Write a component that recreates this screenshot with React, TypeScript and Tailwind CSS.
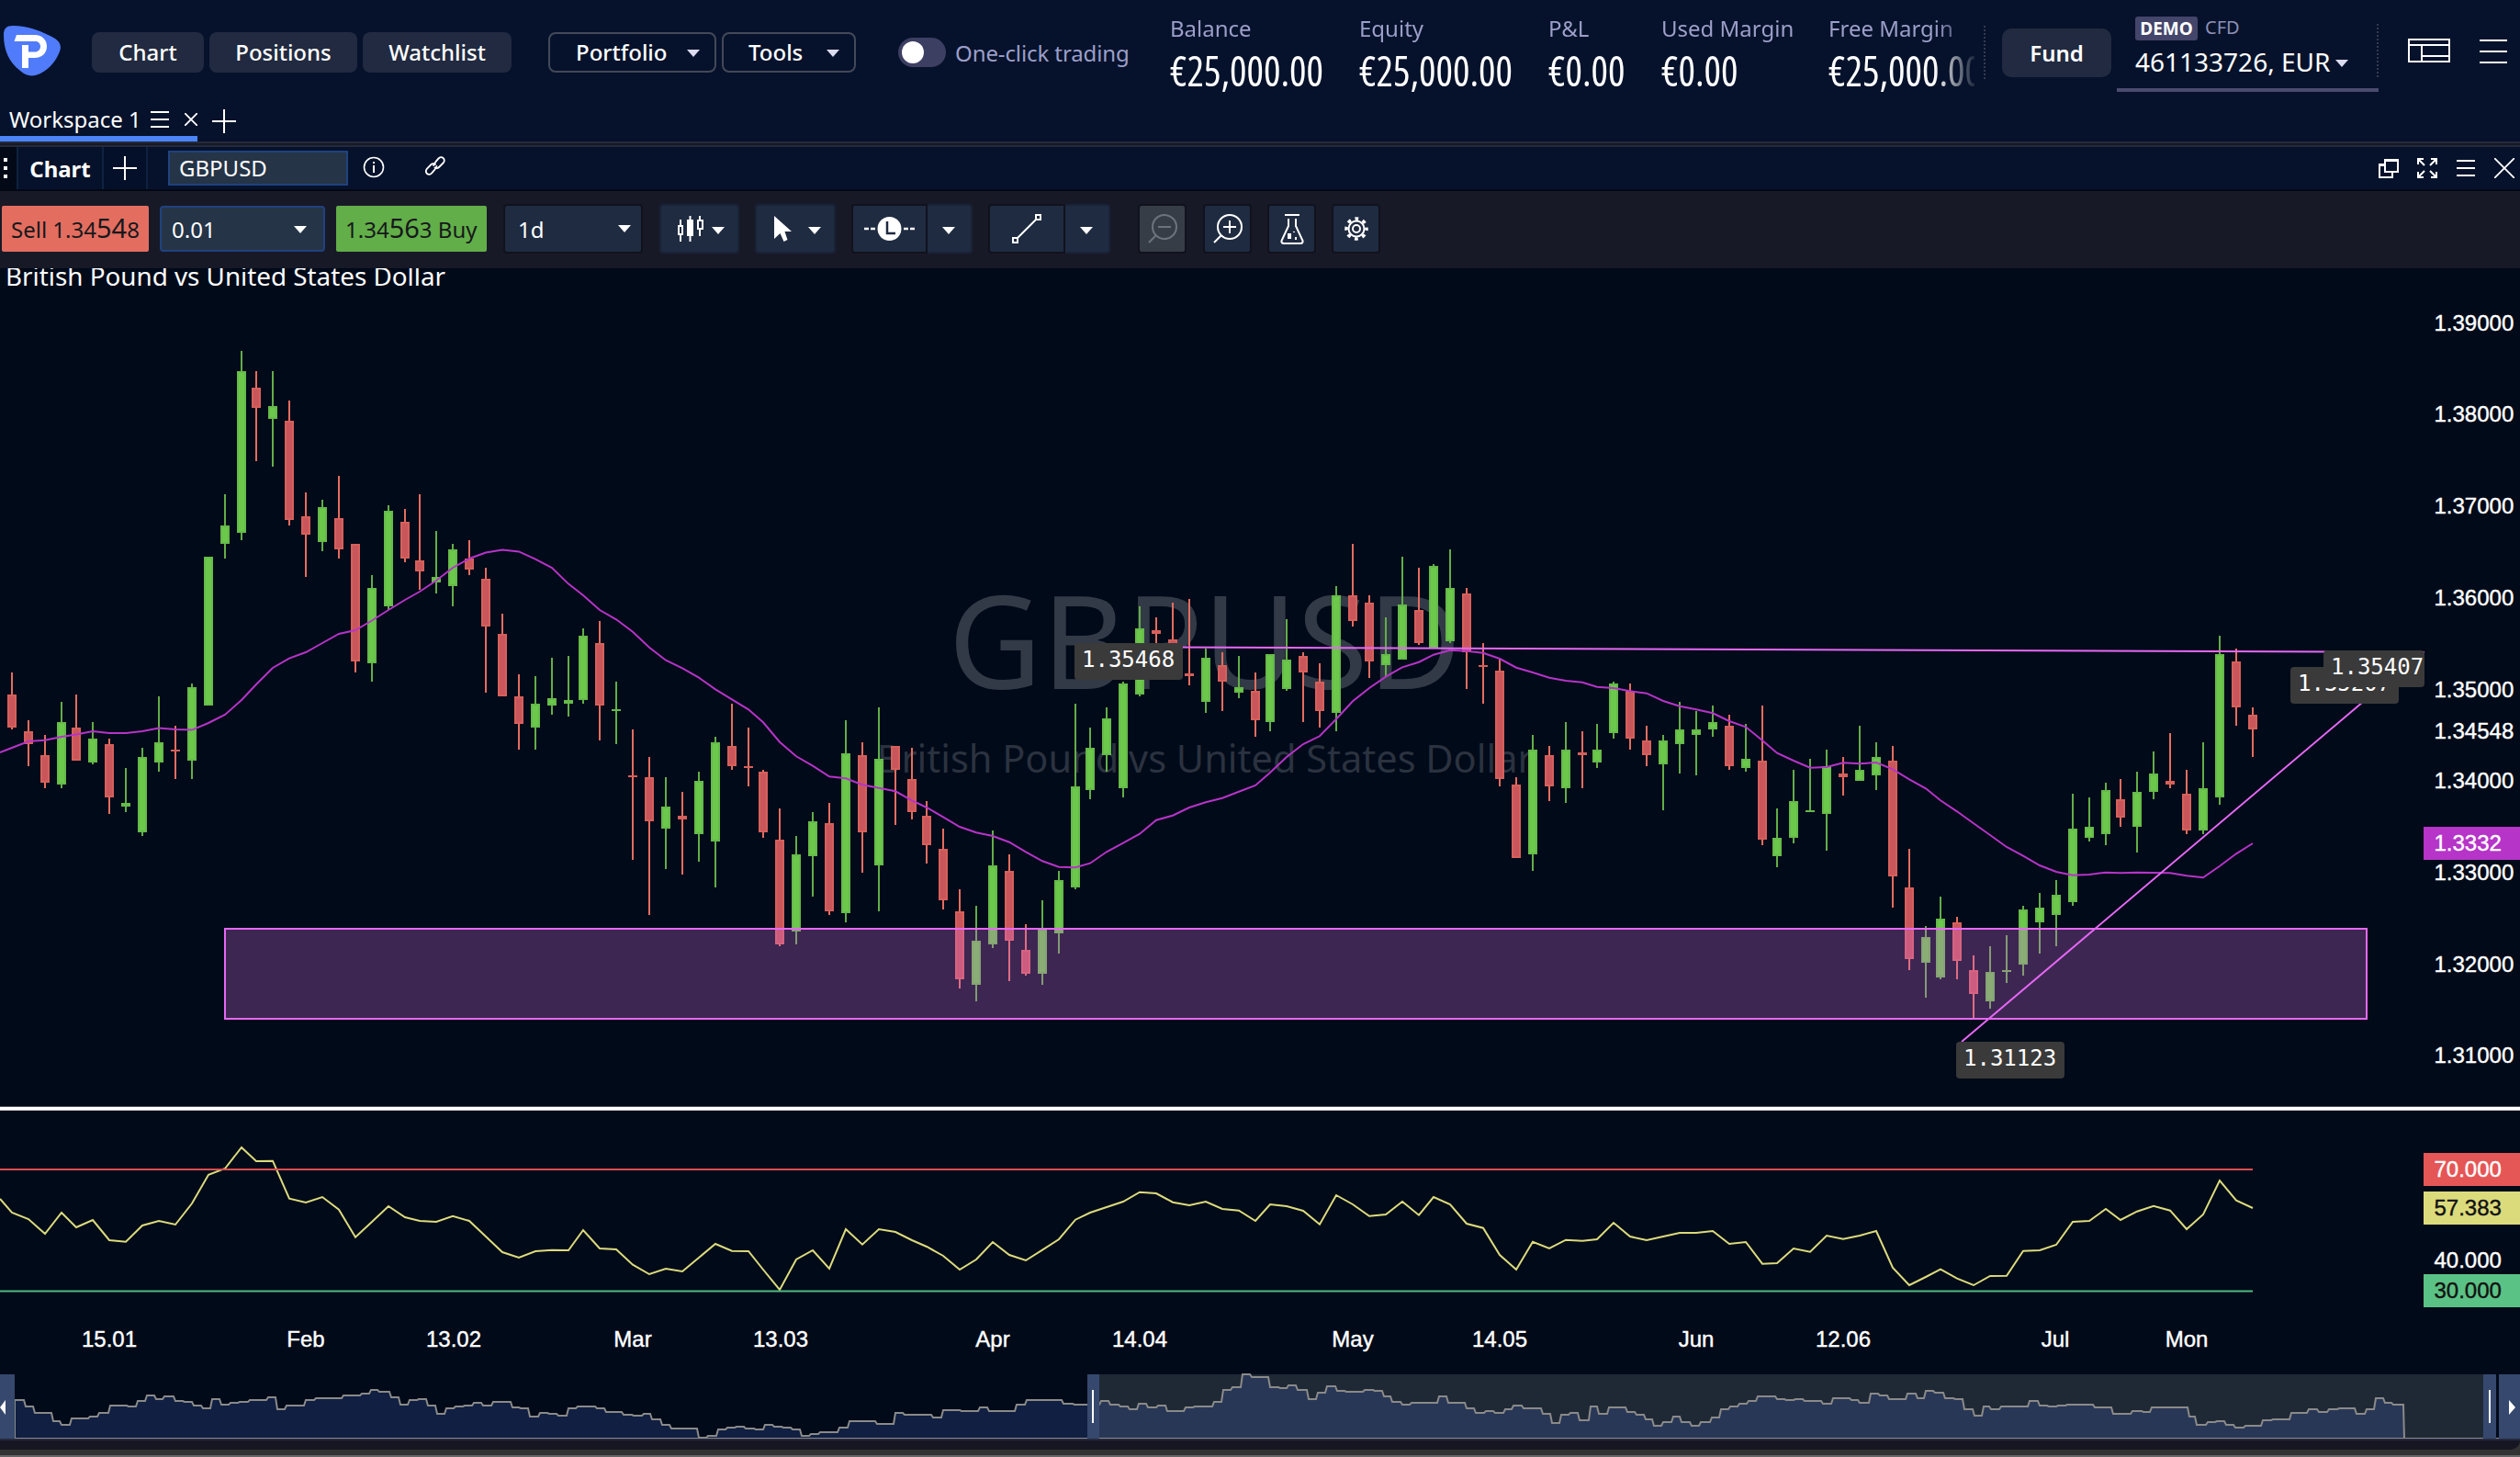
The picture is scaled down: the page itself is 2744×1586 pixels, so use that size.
import type { ReactNode } from 'react';
import clsx from 'clsx';

type Candle = [dir: 'u' | 'd', high: number, top: number, bottom: number, low: number];

// One entry per trading day, in plot pixels
const CANDLES: Candle[] = [
  ['d', 732, 756, 792, 794], ['d', 784, 796, 810, 834], ['d', 800, 822, 852, 858], ['u', 764, 786, 854, 858],
  ['d', 756, 792, 828, 828], ['u', 786, 804, 830, 832], ['d', 804, 810, 868, 886], ['u', 836, 874, 878, 884],
  ['u', 814, 824, 906, 910], ['u', 758, 808, 830, 840], ['d', 790, 816, 818, 848], ['u', 744, 748, 828, 848],
  ['u', 606, 606, 768, 768], ['u', 538, 572, 592, 608], ['u', 382, 404, 580, 588], ['d', 404, 422, 444, 502],
  ['u', 404, 442, 456, 508], ['d', 436, 458, 566, 572], ['d', 536, 562, 582, 628], ['u', 544, 552, 590, 600],
  ['d', 518, 564, 598, 608], ['d', 592, 592, 720, 732], ['u', 626, 640, 722, 742], ['u', 550, 556, 660, 664],
  ['d', 554, 568, 608, 612], ['d', 538, 610, 622, 642], ['u', 578, 628, 634, 646], ['u', 592, 598, 638, 660],
  ['d', 588, 608, 620, 626], ['d', 618, 630, 682, 754], ['d', 668, 690, 758, 758], ['d', 734, 758, 788, 816],
  ['u', 736, 766, 792, 816], ['u', 716, 760, 768, 778], ['u', 714, 762, 766, 780], ['u', 684, 692, 762, 766],
  ['d', 676, 700, 768, 806], ['u', 742, 772, 774, 810], ['d', 794, 844, 846, 936], ['d', 824, 846, 894, 996],
  ['u', 846, 878, 902, 946], ['d', 862, 888, 892, 952], ['u', 840, 850, 908, 938], ['u', 802, 808, 916, 966],
  ['d', 766, 812, 834, 838], ['d', 792, 834, 836, 856], ['d', 838, 840, 906, 912], ['d', 880, 914, 1028, 1030],
  ['u', 910, 930, 1014, 1028], ['u', 884, 894, 932, 976], ['d', 874, 896, 992, 996], ['u', 784, 820, 994, 1004],
  ['d', 808, 822, 906, 950], ['u', 770, 826, 942, 992], ['d', 812, 812, 838, 898], ['d', 814, 848, 884, 892],
  ['d', 872, 888, 920, 940], ['d', 902, 924, 980, 990], ['d', 968, 992, 1066, 1076], ['u', 986, 1024, 1072, 1090],
  ['u', 904, 942, 1028, 1032], ['d', 930, 948, 1024, 1068], ['d', 1006, 1034, 1060, 1062], ['u', 980, 1012, 1060, 1072],
  ['u', 948, 958, 1016, 1038], ['u', 766, 856, 966, 968], ['u', 792, 814, 860, 870], ['u', 770, 782, 822, 840],
  ['u', 742, 744, 858, 868], ['u', 660, 684, 756, 758], ['d', 672, 686, 690, 712], ['d', 656, 696, 710, 714],
  ['d', 652, 733, 736, 746], ['u', 706, 716, 764, 776], ['d', 710, 724, 742, 774], ['u', 714, 748, 754, 760],
  ['d', 732, 752, 784, 802], ['u', 712, 712, 786, 796], ['u', 674, 718, 750, 752], ['d', 710, 714, 732, 786],
  ['d', 722, 742, 774, 792], ['u', 638, 648, 776, 796], ['d', 592, 648, 676, 682], ['d', 648, 656, 720, 738],
  ['u', 672, 712, 724, 736], ['u', 606, 658, 718, 718], ['d', 618, 664, 700, 702], ['u', 614, 616, 706, 706],
  ['u', 598, 640, 698, 700], ['d', 640, 646, 710, 750], ['d', 700, 724, 726, 766], ['d', 718, 730, 848, 856],
  ['d', 846, 854, 934, 934], ['u', 800, 816, 930, 948], ['d', 812, 822, 856, 872], ['u', 786, 816, 858, 874],
  ['d', 796, 819, 822, 858], ['u', 788, 816, 830, 836], ['u', 742, 744, 798, 804], ['d', 744, 752, 804, 816],
  ['d', 790, 806, 822, 834], ['u', 800, 806, 832, 882], ['u', 764, 794, 810, 842], ['u', 774, 794, 800, 844],
  ['u', 768, 786, 794, 802], ['d', 778, 790, 834, 838], ['u', 788, 826, 836, 840], ['d', 768, 828, 914, 920],
  ['u', 880, 912, 932, 944], ['u', 838, 872, 912, 918], ['u', 826, 882, 884, 884], ['u', 816, 834, 886, 926],
  ['d', 824, 842, 846, 866], ['u', 790, 838, 850, 850], ['u', 808, 824, 844, 860], ['d', 812, 828, 954, 988],
  ['d', 924, 966, 1044, 1056], ['u', 1008, 1020, 1048, 1086], ['u', 976, 1000, 1064, 1066], ['d', 998, 1004, 1046, 1066],
  ['d', 1040, 1056, 1082, 1108], ['u', 1030, 1058, 1090, 1098], ['u', 1018, 1056, 1058, 1070], ['u', 986, 990, 1050, 1062],
  ['u', 972, 988, 1004, 1038], ['u', 958, 974, 996, 1030], ['u', 864, 902, 982, 986], ['u', 868, 900, 912, 916],
  ['u', 852, 860, 908, 920], ['d', 848, 870, 890, 900], ['u', 840, 862, 900, 928], ['u', 818, 842, 862, 870],
  ['d', 798, 850, 854, 858], ['d', 838, 864, 904, 908], ['u', 808, 858, 904, 908], ['u', 692, 712, 868, 876],
  ['d', 706, 720, 770, 790], ['d', 770, 778, 794, 824],
];

const MOVING_AVERAGE = [
  814, 807, 805.7, 802, 799.5, 796, 798, 798, 796, 792.5, 794, 794.6, 787, 778, 762, 745, 727, 716.6, 710, 700,
  690, 686, 675.5, 664, 653, 644, 632, 618, 608, 601.5, 598.6, 600.4, 608.6, 618, 635.6, 648, 664, 674.3, 687.7, 704.7,
  718.7, 727.3, 737.7, 750.3, 761.3, 772.3, 786.3, 807.7, 823.3, 833.7, 845.3, 847.3, 854.3, 857.7, 861.3, 871.3, 879,
  889.3, 900, 906.3, 910, 916.7, 927.3, 937.3, 943.7, 944.3, 939.7, 927.3, 917.7, 907.7, 892.7, 887.7, 879, 873.3, 868.7,
  861.7, 855, 841, 824, 810, 801.3, 782.7, 763.3, 749, 736.7, 726.3, 720.7, 712.7, 707.7, 708.7, 710.7, 717, 726.7, 732,
  737.7, 741, 742.7, 747.7, 749, 752.3, 754.7, 763, 768.7, 772.3, 776.3, 785, 791.3, 806, 819.7, 828, 835.7, 835, 830.3,
  831.3, 830, 837.3, 848.3, 858.3, 871.3, 883.3, 896.3, 909, 922, 931.7, 942, 949, 952.7, 952, 949.7, 950.3, 949.7, 950,
  950.3, 953.3, 955.3, 942.7, 929.3, 918,
];

const RSI = [
  1320, 1327, 1343, 1320, 1336, 1328, 1350, 1351.7, 1334, 1329, 1333, 1310, 1278.7, 1272, 1249, 1264, 1263.7, 1304.7,
  1309, 1303, 1316.7, 1346.7, 1330, 1313, 1325, 1329, 1330, 1323.7, 1329, 1346, 1363, 1369, 1362, 1360.7, 1361, 1339,
  1359, 1360, 1376.7, 1387, 1381, 1384, 1369, 1354, 1361.7, 1362, 1382, 1404, 1371, 1361, 1381, 1338, 1354.7, 1338, 1341,
  1350, 1357, 1367, 1382, 1371, 1352, 1366, 1372, 1360.7, 1349, 1327.7, 1320, 1314, 1308, 1297.7, 1299, 1308.7, 1312,
  1308, 1316, 1317.7, 1329, 1311, 1313, 1318, 1332.7, 1301, 1311, 1323.7, 1322, 1308, 1322.7, 1303, 1311, 1332, 1336.7,
  1366, 1382, 1351.7, 1359, 1349.7, 1350.7, 1349, 1331, 1346, 1350, 1346, 1342, 1342, 1340, 1354, 1352, 1375.7, 1375,
  1359, 1362.7, 1345, 1348.7, 1345, 1340, 1380, 1399, 1390, 1381.7, 1391.7, 1399, 1389, 1388.7, 1361.7, 1361, 1355, 1330,
  1329, 1316, 1328, 1318.7, 1312.7, 1317.7, 1338, 1322, 1285, 1306.7, 1315,
];

// Overview steps: start x and height below the top of the strip
const OVERVIEW: [number, number][] = [
  [16, 28], [28, 35], [38, 42], [58, 51], [67, 55], [78, 48], [98, 46], [108, 42], [120, 34], [140, 35], [150, 29],
  [160, 23], [170, 27], [179, 24], [191, 29], [201, 30], [211, 34], [221, 37], [231, 27], [241, 33], [251, 31], [261, 30],
  [272, 28], [292, 25], [302, 38], [312, 34], [333, 28], [344, 26], [374, 23], [394, 21], [404, 17], [413, 19], [426, 25],
  [436, 33], [446, 28], [456, 27], [466, 34], [476, 43], [486, 37], [496, 35], [506, 34], [516, 31], [526, 34], [537, 30],
  [558, 36], [567, 37], [577, 46], [588, 42], [598, 43], [608, 45], [619, 37], [629, 35], [650, 37], [660, 41], [679, 44],
  [690, 45], [701, 43], [710, 49], [721, 55], [731, 59], [761, 69], [771, 67], [782, 60], [792, 58], [802, 57], [812, 59],
  [823, 60], [833, 55], [843, 57], [853, 58], [863, 60], [873, 67], [883, 65], [893, 63], [914, 58], [925, 51], [955, 54],
  [975, 42], [985, 44], [1016, 47], [1027, 39], [1047, 40], [1067, 36], [1077, 40], [1107, 33], [1118, 28], [1158, 32],
  [1170, 33], [1199, 29], [1209, 33], [1220, 35], [1230, 38], [1240, 32], [1250, 36], [1261, 34], [1271, 40], [1291, 36],
  [1301, 35], [1322, 30], [1332, 17], [1342, 14], [1353, 0], [1363, 3], [1383, 14], [1394, 15], [1403, 12], [1413, 17],
  [1425, 27], [1435, 20], [1445, 13], [1456, 18], [1466, 19], [1486, 17], [1497, 18], [1507, 24], [1516, 30], [1527, 33],
  [1537, 31], [1567, 24], [1577, 31], [1597, 37], [1607, 42], [1618, 40], [1628, 42], [1639, 38], [1648, 34], [1659, 37],
  [1680, 43], [1690, 53], [1700, 44], [1710, 42], [1720, 50], [1732, 35], [1741, 43], [1752, 36], [1772, 41], [1782, 44],
  [1792, 49], [1801, 56], [1811, 52], [1822, 46], [1831, 52], [1842, 56], [1852, 52], [1864, 47], [1874, 38], [1884, 35],
  [1894, 32], [1904, 29], [1914, 24], [1935, 27], [1945, 28], [1955, 27], [1965, 29], [1985, 32], [1996, 26], [2016, 28],
  [2025, 31], [2037, 21], [2047, 23], [2057, 27], [2077, 21], [2088, 26], [2097, 18], [2107, 20], [2118, 26], [2129, 27],
  [2139, 38], [2150, 45], [2160, 35], [2168, 38], [2179, 35], [2210, 29], [2221, 34], [2231, 35], [2241, 34], [2251, 33],
  [2281, 36], [2301, 43], [2322, 40], [2334, 41], [2343, 36], [2384, 46], [2392, 55], [2404, 52], [2414, 51], [2424, 55],
  [2434, 58], [2445, 56], [2464, 50], [2475, 49], [2495, 42], [2514, 38], [2525, 41], [2536, 38], [2547, 37], [2566, 43],
  [2577, 38], [2587, 26], [2597, 31], [2606, 33],
];

const PRICE_TICKS: [string, number][] = [
  ['1.39000', 352], ['1.38000', 451], ['1.37000', 551], ['1.36000', 650.5], ['1.35000', 750.5], ['1.34548', 795.5],
  ['1.34000', 850], ['1.33000', 949.5], ['1.32000', 1049.5], ['1.31000', 1149],
];

const TIME_TICKS: [string, number][] = [
  ['15.01', 119], ['Feb', 333], ['13.02', 494], ['Mar', 689], ['13.03', 850], ['Apr', 1081], ['14.04', 1241],
  ['May', 1473], ['14.05', 1633], ['Jun', 1847], ['12.06', 2007], ['Jul', 2238], ['Mon', 2381],
];

const METRICS = [
  { label: 'Balance', value: '€25,000.00', width: 'w-[206px]' },
  { label: 'Equity', value: '€25,000.00', width: 'w-[206px]' },
  { label: 'P&L', value: '€0.00', width: 'w-[123px]' },
  { label: 'Used Margin', value: '€0.00', width: 'w-[182px]' },
  { label: 'Free Margin', value: '€25,000.00', width: 'w-[206px]' },
];

const candleX = (i: number) => 13 + 18 * i - 2 * Math.floor(0.0964 * i + 0.65);

const toPoints = (values: number[], startY: number) =>
  [`0,${startY}`, ...values.map((y, i) => `${candleX(i)},${y}`)].join(' ');

function Caret({ className }: { className?: string }) {
  return (
    <svg className={clsx('h-2 w-3.5 shrink-0', className)} viewBox="0 0 14 8">
      <path d="M0 0H14L7 8Z" fill="currentColor" />
    </svg>
  );
}

function Burger({ className }: { className?: string }) {
  return (
    <svg className={clsx('h-[18px] w-5 shrink-0', className)} viewBox="0 0 20 18">
      <path d="M0 1H20M0 9H20M0 17H20" stroke="currentColor" strokeWidth="2" />
    </svg>
  );
}

function Plus({ className }: { className?: string }) {
  return (
    <svg className={clsx('h-[26px] w-[26px] shrink-0', className)} viewBox="0 0 26 26">
      <path d="M13 0V26M0 13H26" stroke="currentColor" strokeWidth="2" />
    </svg>
  );
}

function Logo() {
  return (
    <svg className="ml-[3px] mt-[27px] h-14 w-16 shrink-0" viewBox="0 0 64 56">
      <path
        d="M1 11C1 4 4 1 11 1C27 1 43 7 57 15C63 19 64 24 62 29C58 39 52 47 41 53C33 57 25 56 19 50C7 41 1 28 1 11Z"
        fill="#507bfa"
      />
      <path
        d="M15 11H35C43 11 48 16.500 48 23.500C48 31 42.500 36 35 36H28V47H21V22H28V29.500H35C38.500 29.500 41 27 41 23.500C41 20 38.500 18 35 18H12.500Z"
        fill="#fff"
      />
    </svg>
  );
}

function NavButton({ children, className }: { children: ReactNode; className?: string }) {
  return (
    <div className={clsx('mt-[35px] flex h-11 items-center justify-center rounded-lg bg-[#212a40] font-medium', className)}>
      {children}
    </div>
  );
}

function MenuButton({ children, className }: { children: ReactNode; className?: string }) {
  return (
    <div className={clsx('mt-[35px] flex h-11 items-center justify-between rounded-lg border-2 border-[#434959] pr-4 font-medium', className)}>
      {children}
      <Caret className="mt-0.5 text-[#dcdcf0]" />
    </div>
  );
}

function Header() {
  return (
    <header className="flex h-[104px] w-full items-start whitespace-nowrap">
      <Logo />
      <NavButton className="ml-[33px] w-[122px]">Chart</NavButton>
      <NavButton className="ml-1.5 w-[161px]">Positions</NavButton>
      <NavButton className="ml-1.5 w-[162px]">Watchlist</NavButton>
      <MenuButton className="ml-10 w-[183px] pl-[28px]">Portfolio</MenuButton>
      <MenuButton className="ml-1.5 w-[146px] pl-[27px]">Tools</MenuButton>

      <div className="ml-[46px] mt-[41px] flex h-8 w-[252px] items-center gap-2.5 text-[#9c9fc9]">
        <div className="h-8 w-[52px] shrink-0 rounded-full bg-[#3c3f62] p-1">
          <div className="h-6 w-6 rounded-full bg-white" />
        </div>
        <span className="pt-0.5 tracking-[-0.1px]">One-click trading</span>
      </div>

      <div className="ml-11 flex h-[104px] w-[876px] overflow-hidden pt-[19px] [mask-image:linear-gradient(to_right,#000_95%,transparent_100.500%)]">
        {METRICS.map((m) => (
          <div key={m.label} className={clsx('flex shrink-0 flex-col gap-[10px]', m.width)}>
            <span className="leading-6 text-[#9c9fc9]">{m.label}</span>
            <span className="w-fit origin-left scale-x-[0.945] font-['Open_Sans','Noto_Sans',sans-serif] text-[46px] leading-[46px] [font-stretch:75%]">
              {m.value}
            </span>
          </div>
        ))}
      </div>

      <div className="ml-auto flex">
        <div className="mt-[28px] h-[58px] border-l-2 border-dotted border-[#343b50]" />
        <div className="ml-[18px] mt-[31px] flex h-[53px] w-[119px] items-center justify-center rounded-[10px] bg-[#212a40] pt-px font-semibold">
          Fund
        </div>
        <div className="ml-[6px] h-[100px] w-[285px] border-b-4 border-[#4a4b6e] pl-5 pt-[18px]">
          <div className="flex h-[26px] items-center gap-2 text-xl leading-none">
            <span className="flex h-[26px] w-[68px] items-center justify-center rounded-[3px] bg-[#44456a] pt-px text-[19px] font-bold">
              DEMO
            </span>
            <span className="pb-0.5 text-[#8d90b5]">CFD</span>
          </div>
          <div className="mt-[9px] flex items-center gap-1.5 text-[28px] leading-[28px]">
            461133726, EUR
            <Caret className="mt-1 text-[#dcdcf0]" />
          </div>
        </div>
        <div className="-ml-0.5 mt-[26px] h-[58px] border-l-2 border-dotted border-[#343b50]" />
        <svg className="ml-8 mt-[42px] h-[26px] w-[46px]" viewBox="0 0 46 26" fill="none" stroke="#fff" strokeWidth="2">
          <path d="M1 1H45V25H1ZM1 7H45M15 7V25M15 19H45" />
        </svg>
        <svg className="ml-8 mt-[43px] h-[26px] w-[44px]" viewBox="0 0 44 26" stroke="#fff" strokeWidth="2">
          <path d="M0 1H30M0 13H30M0 25H30" />
        </svg>
      </div>
    </header>
  );
}

function WorkspaceTabs() {
  return (
    <div className="flex h-[56px] flex-col">
      <div className="flex h-[50px] items-end">
        <div className="flex h-[50px] w-[215px] items-center border-b-6 border-[#4b83f8] pl-2.5 pt-2">
          <span className="w-[154px] whitespace-nowrap">Workspace 1</span>
          <Burger />
          <svg className="ml-[17px] h-3.5 w-3.5" viewBox="0 0 14 14" stroke="#fff" strokeWidth="1.800">
            <path d="M0 0L14 14M14 0L0 14" />
          </svg>
        </div>
        <Plus className="mb-[9px] ml-4" />
      </div>
      <div className="h-0.5 bg-[#252a3c]" />
      <div className="h-0.5 bg-[#171826]" />
      <div className="h-0.5 bg-[#252a3c]" />
    </div>
  );
}

function ChartHeader() {
  return (
    <div className="flex h-12 items-stretch border-b-2 border-[#030814] bg-[#06122b]">
      <div className="flex w-5 flex-col items-center justify-center gap-[5px] border-r-2 border-[#0e2240] bg-[#030916] pr-1.5">
        <i className="h-1 w-1 bg-white" />
        <i className="h-1 w-1 bg-white" />
        <i className="h-1 w-1 bg-white" />
      </div>
      <div className="flex w-[93px] items-center justify-center border-r-2 border-[#0e2240] pt-px font-bold">Chart</div>
      <div className="flex w-12 items-center border-r-2 border-[#0e2240] bg-[#041029] pl-2.5">
        <Plus />
      </div>
      <div className="ml-[22px] mt-1 flex h-[38px] w-[196px] items-center border-2 border-[#1f427f] bg-[#253447] pl-2.5">GBPUSD</div>
      <svg className="ml-4 mt-[10px] h-6 w-6" viewBox="0 0 24 24" fill="none" stroke="#fff" strokeWidth="1.600">
        <circle cx="12" cy="12" r="10.500" />
        <path d="M12 10V18M12 6V8" strokeWidth="2" />
      </svg>
      <svg className="ml-[42px] mt-[8px] h-[26px] w-[26px]" viewBox="0 0 26 26" fill="none" stroke="#fff" strokeWidth="1.800" strokeLinecap="round">
        <path d="M11 12C12 10 14 7 16.500 4.500C18 3 20 2.500 21.500 4C23.500 5.500 23 8 21.500 9.500L17 14C15.500 15.500 14 15.500 12.500 14.500" />
        <path d="M14.500 13C13.500 15.500 12 17.500 9.500 20C8 22 5.500 22.500 4 21C2.500 19.500 2.500 17.500 4 15.500L8.500 11C10 9.500 11.500 10 13 11" />
      </svg>
      <div className="ml-auto flex items-center">
        <svg className="h-[22px] w-[22px]" viewBox="0 0 22 22" fill="none" stroke="#fff" strokeWidth="2">
          <path d="M7 2H21V15H7ZM7 3H21M7 7H1V21H15V15M1 8H7" />
        </svg>
        <svg className="ml-5 h-[22px] w-[22px]" viewBox="0 0 22 22" fill="none" stroke="#fff" strokeWidth="2">
          <path d="M1 7V1H7M1 1L8 8M15 1H21V7M21 1L14 8M1 15V21H7M1 21L8 14M21 15V21H15M21 21L14 14" />
        </svg>
        <Burger className="ml-[21px]" />
        <svg className="ml-[21px] mr-1.5 h-[22px] w-[22px]" viewBox="0 0 22 22" stroke="#fff" strokeWidth="1.800">
          <path d="M0 0L22 22M22 0L0 22" />
        </svg>
      </div>
    </div>
  );
}

const toolBase = 'flex h-[54px] shrink-0 items-center rounded-[4px] border-2 border-[#10121d]';
const toolSoft = 'flex h-[54px] shrink-0 items-center rounded-[4px] border-2 border-[#192338] bg-[#1f2b41]';

function Toolbar() {
  return (
    <div className="flex h-[84px] items-center whitespace-nowrap bg-[#181927] pb-0.5 leading-none">
      <div className="ml-0.5 flex h-[50px] w-40 items-center rounded-[2px] bg-[#e36e60] pb-1 pl-2.5 text-[#17181c]">
        <span className="flex items-baseline">
          <span className="whitespace-pre">Sell 1.34</span>
          <span className="text-[29px] leading-none">54</span>
          <span>8</span>
        </span>
      </div>
      <div className="ml-3 flex h-[50px] w-[180px] items-center justify-between rounded-[4px] border-2 border-[#1f427f] bg-[#253447] pl-[11px] pr-[18px] pt-0.5">
        0.01
        <Caret />
      </div>
      <div className="ml-3 flex h-[50px] w-[164px] items-center rounded-[2px] bg-[#62ae49] pb-1 pl-2.5 text-[#17181c]">
        <span className="flex items-baseline">
          <span>1.34</span>
          <span className="text-[29px] leading-none">56</span>
          <span className="whitespace-pre">3 Buy</span>
        </span>
      </div>
      <div className={clsx(toolBase, 'ml-[18px] w-[152px] justify-between bg-[#1f2b41] pl-[14px] pr-[11px]')}>
        <span className="pt-0.5">1d</span>
        <Caret />
      </div>
      <div className={clsx(toolSoft, 'ml-[18px] w-[87px] pl-[17px]')}>
        <svg className="h-7 w-[30px]" viewBox="0 0 30 28" fill="none" stroke="#fff" strokeWidth="2">
          <path d="M4 4V10M4 21V28M2 11H6V20H2ZM25 0V5M25 15V22M23 5H28V14H23Z" />
          <path d="M14.500 0V28" />
          <path d="M12 5H17V21H12Z" fill="#fff" />
        </svg>
        <Caret className="ml-2 mt-1" />
      </div>
      <div className={clsx(toolSoft, 'ml-[17px] w-[88px] pl-[19px]')}>
        <svg className="h-7 w-5" viewBox="0 0 20 28" fill="#fff">
          <path d="M0 0L19 17H11.500L14.500 26L10.500 28L6.500 19L0 25Z" />
        </svg>
        <Caret className="ml-[17px] mt-1" />
      </div>
      <div className={clsx(toolBase, 'ml-[17px] w-[83px] rounded-r-none bg-[#1f2b41] pl-3')}>
        <svg className="h-7 w-14" viewBox="0 0 56 28">
          <path d="M0 14H5M7 14H12M43 14H48M50 14H55" stroke="#fff" strokeWidth="2.500" />
          <circle cx="27.500" cy="14" r="13" fill="#fff" />
          <path d="M25 6V19H34" fill="none" stroke="#1f2b41" strokeWidth="2.500" />
        </svg>
      </div>
      <div className={clsx(toolSoft, 'w-[49px] rounded-l-none border-l-0 pl-[16px]')}>
        <Caret className="mt-1" />
      </div>
      <div className={clsx(toolBase, 'ml-[17px] w-[84px] rounded-r-none bg-[#1f2b41] pl-6')}>
        <svg className="h-8 w-8" viewBox="0 0 32 32" fill="none" stroke="#fff" strokeWidth="2">
          <path d="M6 26L26 6" />
          <path d="M1 26H6V31H1ZM26 1H31V6H26Z" />
        </svg>
      </div>
      <div className={clsx(toolSoft, 'w-[49px] rounded-l-none border-l-0 pl-[16px]')}>
        <Caret className="mt-1" />
      </div>

      <div className={clsx(toolBase, 'ml-[30px] w-[53px] justify-center bg-[#363d46]')}>
        <svg className="h-[34px] w-[34px]" viewBox="0 0 34 34" fill="none" stroke="#6d737c" strokeWidth="2">
          <circle cx="19" cy="15" r="13" />
          <path d="M10 24L2 32M12 15H26" />
        </svg>
      </div>
      <div className={clsx(toolBase, 'ml-[18px] w-[53px] justify-center bg-[#1f2b41]')}>
        <svg className="h-[34px] w-[34px]" viewBox="0 0 34 34" fill="none" stroke="#fff" strokeWidth="2">
          <circle cx="19" cy="15" r="13" />
          <path d="M10 24L2 32M12 15H26M19 8V22" />
        </svg>
      </div>
      <div className={clsx(toolBase, 'ml-[17px] w-[53px] justify-center bg-[#1f2b41]')}>
        <svg className="h-[34px] w-[26px]" viewBox="0 0 26 34" fill="none" stroke="#fff" strokeWidth="2">
          <path d="M5 2H21" />
          <path d="M9 6V14L1.500 30Q1 33 4 33H22Q25 33 24.500 30L17 14V6" />
          <path d="M8 22H12V28H8ZM16 26H18V29H16ZM14 20H16V21H14Z" fill="#fff" stroke="none" />
        </svg>
      </div>
      <div className={clsx(toolBase, 'ml-[17px] w-[53px] justify-center bg-[#1f2b41]')}>
        <svg className="h-[26px] w-[26px]" viewBox="0 0 26 26" fill="none" stroke="#fff">
          <circle cx="13" cy="13" r="8.500" strokeWidth="2" />
          <circle cx="13" cy="13" r="4" strokeWidth="2" />
          <circle cx="13" cy="13" r="11" strokeWidth="3.500" strokeDasharray="3.800 4.840" strokeDashoffset="1.900" />
        </svg>
      </div>
    </div>
  );
}

function PriceTag({ x, y, width, value }: { x: number; y: number; width: number; value: string }) {
  return (
    <g>
      <rect x={x} y={y} width={width} height="40" rx="4" fill="#3a3a3a" />
      <text x={x + 8} y={y + 26} fill="#fff" fontSize="24" className="font-['DejaVu_Sans_Mono',monospace]">
        {value}
      </text>
    </g>
  );
}

function AxisBadge({ y, fill, color, value }: { y: number; fill: string; color: string; value: string }) {
  return (
    <g>
      <rect x="2639" y={y} width="105" height="36" fill={fill} />
      <text x="2650.500" y={y + 26} fill={color} stroke={color} strokeWidth="0.400">
        {value}
      </text>
    </g>
  );
}

function PriceChart() {
  return (
    <svg className="block h-[912px] w-full font-['Liberation_Sans',Arial,sans-serif] text-2xl" viewBox="0 292 2744 912">
      <text x="6" y="311" fill="#fff" fontSize="27.800" className="font-['Noto_Sans',sans-serif]">
        British Pound vs United States Dollar
      </text>
      <g textAnchor="middle" className="font-['Noto_Sans',sans-serif]">
        <text x="1312" y="750" fontSize="140" fill="#333a47">GBPUSD</text>
        <text x="1312" y="840.500" fontSize="41.500" fill="#2b323f">British Pound vs United States Dollar</text>
      </g>

      <g shapeRendering="crispEdges">
        {CANDLES.map(([dir, high, top, bottom, low], i) => {
          const x = candleX(i);
          const up = dir === 'u';
          return (
            <g key={i}>
              <rect x={x - 1} y={high} width="2" height={low - high} fill={up ? '#62ae49' : '#e36e60'} />
              <rect x={x - 5} y={top} width="10" height={bottom - top} fill={up ? '#66ba4a' : '#d6605b'} />
              {bottom - top > 4 && (
                <rect x={x - 3} y={top + 2} width="6" height={bottom - top - 4} fill={up ? '#6bc84b' : '#c9565a'} />
              )}
            </g>
          );
        })}
      </g>

      <polyline points={toPoints(MOVING_AVERAGE, 819)} fill="none" stroke="#b634c8" strokeWidth="2" />

      <rect x="245" y="1011" width="2332" height="98" fill="#d66ae1" fillOpacity="0.290" stroke="#e668f6" strokeWidth="2" />
      <path d="M1178 704L2640 710M2136 1134L2612 731" stroke="#e668f6" strokeWidth="2" />
      <PriceTag x={1170} y={700} width={118} value="1.35468" />
      <PriceTag x={2130} y={1134} width={118} value="1.31123" />
      <PriceTag x={2494} y={726} width={118} value="1.35207" />
      <PriceTag x={2530} y={708} width={110} value="1.35407" />

      {PRICE_TICKS.map(([label, y]) => (
        <text key={label} x="2650.500" y={y + 8} fill="#fff" stroke="#fff" strokeWidth="0.400">
          {label}
        </text>
      ))}
      <AxisBadge y={900} fill="#b634c8" color="#fff" value="1.3332" />
    </svg>
  );
}

function RsiPanel() {
  return (
    <svg className="block h-[287px] w-full font-['Liberation_Sans',Arial,sans-serif] text-2xl" viewBox="0 1209 2744 287">
      <polyline points={toPoints(RSI, 1305)} fill="none" stroke="#dcdb7c" strokeWidth="2" />
      <path d="M0 1273H2453" stroke="#d94f4f" strokeWidth="2" />
      <path d="M0 1405.500H2453" stroke="#4fb980" strokeWidth="2" />
      <AxisBadge y={1255} fill="#e55656" color="#fff" value="70.000" />
      <AxisBadge y={1297} fill="#dcdb7c" color="#111" value="57.383" />
      <text x="2650.500" y="1380" fill="#fff" stroke="#fff" strokeWidth="0.400">40.000</text>
      <AxisBadge y={1387} fill="#5bc285" color="#111" value="30.000" />
      <g textAnchor="middle" fill="#fff" stroke="#fff" strokeWidth="0.400">
        {TIME_TICKS.map(([label, x]) => (
          <text key={label} x={x} y="1465.500">
            {label}
          </text>
        ))}
      </g>
    </svg>
  );
}

function Navigator() {
  const line = OVERVIEW.map(([x, y], i) => {
    const next = OVERVIEW[i + 1];
    return `L${x} ${y} L${next ? next[0] - 2 : 2617} ${y}`;
  }).join(' ');
  const shape = `M16 70 ${line} L2618 70`;

  return (
    <svg className="-mt-0.5 block h-[74px] w-full" viewBox="0 -2 2744 74">
      <rect x="1197" y="0" width="1507" height="70" fill="#1f2936" />
      <path d={`${shape}Z`} fill="#101f42" />
      <clipPath id="selected">
        <rect x="1197" y="-2" width="1507" height="72" />
      </clipPath>
      <path d={`${shape}Z`} fill="#293757" clipPath="url(#selected)" />
      <path d={shape} fill="none" stroke="#8a8a88" strokeWidth="2" />
      <path d="M16 69.500H2744" stroke="#8a8a88" />
      <g fill="#36486d">
        <rect width="16" height="70" />
        <rect x="1184" width="13" height="70" />
        <rect x="2704" width="14" height="70" />
        <rect x="2721" width="23" height="70" />
      </g>
      <path d="M1190 17V53M2711 17V53" stroke="#fff" strokeWidth="2" />
      <path d="M0 36L6 28V44ZM2739 36L2732 28V44Z" fill="#fff" />
      <rect y="70" width="2744" height="2" fill="#26283f" />
    </svg>
  );
}

export default function App() {
  return (
    <div className="flex h-[1586px] w-[2744px] flex-col overflow-hidden bg-[#06122b] font-['Noto_Sans',sans-serif] text-2xl leading-none text-white">
      <Header />
      <WorkspaceTabs />
      <ChartHeader />
      <Toolbar />
      <main className="bg-[#000a19]">
        <PriceChart />
        <div className="h-[5px] border-y border-t-[#4b525c] border-b-[#c9ccd0] bg-white" />
        <RsiPanel />
        <Navigator />
      </main>
      <div className="h-[18px] bg-[#333]">
        <div className="h-2.5 rounded-br-[10px] bg-[#161622]" />
        <div className="h-1.5" />
        <div className="h-0.5 bg-[#666]" />
      </div>
    </div>
  );
}
